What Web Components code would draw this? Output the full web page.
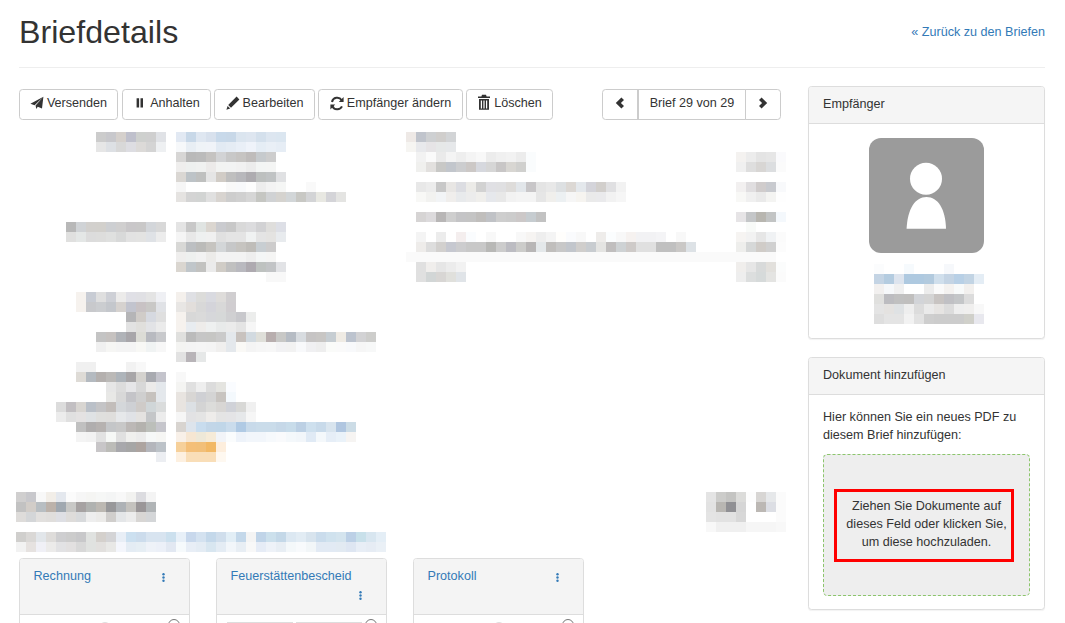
<!DOCTYPE html>
<html lang="de">
<head>
<meta charset="utf-8">
<title>Briefdetails</title>
<style>
html, body { margin: 0; height: 623px; overflow: hidden; background: #fff; }
body { font: 12.6px/18px "Liberation Sans", Arial, sans-serif; color: #333; }
</style>
</head>
<body>
<brief-page></brief-page>

<script>
const icons = {
  send: `<path d="M13.4.8.4 7.8 4.6 9.2zM13.4.8 5.6 9.6 6.2 13 7.8 10.8 12 12.6z"/>`,
  pause: `<path d="M3.6 2.2h2.5v9.4H3.6zM7.5 2.2H10v9.4H7.5z"/>`,
  pencil: `<path d="M10.6.6 13.4 3.4 5 11.8 2.2 9zM1.6 10 4.2 12.6.4 13.8z"/>`,
  refresh: `<path fill="none" stroke="currentColor" stroke-width="2" d="M11.7 4.2A5.3 5.3 0 0 0 2 6M2.3 9.8a5.3 5.3 0 0 0 9.7.6"/><path d="M13.6 1V6H8.8zM.4 13.4V8.4h4.8z"/>`,
  trash: `<path fill-rule="evenodd" d="M5-1.2h4l.6 1.6H13v1.6H1V.4h3.4zM2 3h10v10.8H2zM3.8 4.4v8h1.2v-8zM6.4 4.4v8h1.2v-8zM9 4.4v8h1.2v-8z"/>`,
  left: `<path d="M8.4 1.6 11 4 7.9 7 11 10 8.4 12.4 2.8 7z"/>`,
  right: `<path d="M5.6 1.6 3 4 6.1 7 3 10 5.6 12.4 11.2 7z"/>`,
};

// blurred-out text, one row of 10px cells per ";", "-" leaves a cell empty
class PixelPatch extends HTMLElement {
  connectedCallback() {
    const root = this.attachShadow({ mode: "open" });
    const rows = this.getAttribute("rows").trim().split(";").map((row) => {
      const cells = row.trim().split(/\s+/).map((c) =>
        `<i style="background:${c === "-" ? "transparent" : "#" + c}"></i>`);
      return `<div>${cells.join("")}</div>`;
    });
    root.innerHTML = `<style>
      :host { display: block; flex: none; }
      div { display: flex; height: 10px; }
      i { display: block; flex: none; width: 10px; height: 10px; }
    </style>${rows.join("")}`;
  }
}

class ToolButton extends HTMLElement {
  connectedCallback() {
    const root = this.attachShadow({ mode: "open" });
    const icon = this.getAttribute("icon");
    root.innerHTML = `<style>
      :host {
        display: inline-flex; align-items: center; justify-content: center; gap: 3px;
        box-sizing: border-box; height: 31px; padding: 0 0 3px;
        border: 1px solid #ccc; border-radius: 3.6px; background: #fff; color: #333;
        white-space: nowrap; cursor: pointer;
      }
      :host([joined="left"]) { border-radius: 3.6px 0 0 3.6px; }
      :host([joined="mid"]) { border-radius: 0; margin-left: -1px; border-left-width: 2px; }
      :host([joined="right"]) { border-radius: 0 3.6px 3.6px 0; margin-left: -1px; }
      svg { width: 14px; height: 14px; fill: currentColor; flex: none; overflow: visible; }
    </style>${icon ? `<svg viewBox="0 0 14 14">${icons[icon]}</svg>` : ""}<slot></slot>`;
  }
}

class SidePanel extends HTMLElement {
  connectedCallback() {
    const root = this.attachShadow({ mode: "open" });
    root.innerHTML = `<style>
      :host {
        display: block; border: 1px solid #ddd; border-radius: 3.6px; background: #fff;
        box-shadow: 0 1px 1px rgba(0,0,0,.05);
      }
      header {
        box-sizing: border-box; height: 37px; padding: 8px 14px;
        background: #f5f5f5; border-bottom: 1px solid #ddd; border-radius: 2.6px 2.6px 0 0;
      }
      section { padding: var(--body-pad, 13.5px 14px); }
    </style><header>${this.getAttribute("heading")}</header><section><slot></slot></section>`;
  }
}

class DocCard extends HTMLElement {
  connectedCallback() {
    const root = this.attachShadow({ mode: "open" });
    const wrap = this.hasAttribute("wrap");
    root.innerHTML = `<style>
      :host {
        display: block; box-sizing: border-box; width: 170.5px; height: 200px;
        border: 1px solid #ddd; border-radius: 3.6px; background: #fff;
      }
      header {
        box-sizing: border-box; height: 56px; padding: 8px 13.5px;
        background: #f4f4f4; border-bottom: 1px solid #ddd; border-radius: 2.6px 2.6px 0 0;
        display: flex; flex-wrap: wrap; align-content: flex-start; justify-content: space-between; column-gap: 10px;
      }
      a { color: #337ab7; text-decoration: none; }
      svg { display: block; width: 3px; height: 9px; fill: #337ab7; margin: 6px 10.5px 0 auto; }
      .body { position: relative; height: 100px; overflow: hidden; }
      .lens {
        position: absolute; right: 9px; top: 4px; box-sizing: border-box; width: 12px; height: 12px;
        border: 1.5px solid #777; border-radius: 50%;
      }
      .thumb {
        position: absolute; left: 79px; top: 7px; box-sizing: border-box; width: 12px; height: 12px;
        border: 1px solid #ddd; border-radius: 50%;
      }
      .rule { position: absolute; top: 7px; height: 1px; width: 66px; background: #ddd; }
    </style><header><a href="#">${this.getAttribute("heading")}</a>
      <svg viewBox="0 0 3 9"><circle cx="1.5" cy="1.3" r="1.2"/><circle cx="1.5" cy="4.5" r="1.2"/><circle cx="1.5" cy="7.7" r="1.2"/></svg>
    </header><div class="body"><span class="lens"></span>${wrap
      ? `<span class="rule" style="left:10px"></span><span class="rule" style="left:79px"></span>`
      : `<span class="thumb"></span>`}</div>`;
  }
}

class DropZone extends HTMLElement {
  connectedCallback() {
    const root = this.attachShadow({ mode: "open" });
    root.innerHTML = `<style>
      :host {
        display: flex; align-items: center; justify-content: center;
        box-sizing: border-box; height: 142px;
        border: 1px dashed #8cc56c; border-radius: 4.5px; background: #eee;
      }
      div {
        box-sizing: border-box; width: 180px; height: 73px; padding: 5px 1px 0 6px; margin-right: 5px;
        border: 3px solid #f00; text-align: center;
      }
    </style><div><slot></slot></div>`;
  }
}

class BriefPage extends HTMLElement {
  connectedCallback() {
    const root = this.attachShadow({ mode: "open" });
    root.innerHTML = `<style>
      :host { display: block; padding: 0 20px 0 19px; }
      .title { display: flex; justify-content: space-between; align-items: center; height: 67px; border-bottom: 1px solid #eee; }
      h1 { margin: 0 0 4px; font-size: 32.2px; font-weight: 500; line-height: 36px; }
      .title a { color: #337ab7; text-decoration: none; margin-bottom: 4px; }
      .cols { display: flex; gap: 27px; margin-top: 18px; }
      main { width: 762px; flex: none; }
      aside { flex: 1; display: flex; flex-direction: column; gap: 18px; }
      .tools { display: flex; justify-content: space-between; height: 31px; margin-top: 3px; }
      .tools > div { display: flex; gap: 3px; }
      .tools > div.pager { gap: 0; }
      .details { display: flex; height: 330px; margin: 12px 0 0 -3px; }
      .facts { width: 390px; flex: none; display: flex; flex-direction: column; }
      .notes { display: flex; flex-direction: column; flex: none; width: 380px; }
      .note { display: flex; justify-content: space-between; }
      .section-head { display: flex; justify-content: space-between; margin: 30px -5px 0 -3px; }
      .cards { display: flex; gap: 26.5px; margin-top: 6px; }
      .avatar {
        position: relative; width: 115px; height: 115px; margin: 0 auto 11px;
        background: #9b9b9b; border-radius: 12px; display: block;
      }
      .avatar svg { display: block; width: 115px; height: 115px; fill: #fff; }
      .recipient { display: flex; justify-content: center; padding-left: 4px; }
      p { margin: 0 0 10px; }
      .doc { --body-pad: 13px 14px; }
      .who { --body-pad: 14px 14px 14px; }
    </style>
    <div class="title">
      <h1>Briefdetails</h1>
      <a href="#">« Zurück zu den Briefen</a>
    </div>
    <div class="cols">
      <main>
        <div class="tools">
          <div>
            <tool-button icon="send" style="width:99px">Versenden</tool-button>
            <tool-button icon="pause" style="width:89px;margin-left:1px">Anhalten</tool-button>
            <tool-button icon="pencil" style="width:101px">Bearbeiten</tool-button>
            <tool-button icon="refresh" style="width:145px">Empfänger ändern</tool-button>
            <tool-button icon="trash" style="width:87px">Löschen</tool-button>
          </div>
          <div class="pager">
            <tool-button icon="left" joined="left" style="width:36px"></tool-button>
            <tool-button joined="mid" style="width:109px">Brief 29 von 29</tool-button>
            <tool-button icon="right" joined="right" style="width:36px"></tool-button>
          </div>
        </div>
        <div class="details">
          <div class="facts">
            <pixel-patch rows="- - - - - - - - ccc c8c8cc d5d0cc bfc0cc ced0ce cfcfcf e0e2e6 - e2e9f3 c8d8e8 dfe7f1 d8e1ed c8d9ea c8d8e8 dbe5ef dee6f0 d4e0ec dde6f0 dbe6f0;
              - - - - - - - - e6e6e6 dde0e4 d8d8d8 dddde2 dcdad8 d4d4d4 eef0f2 - f6f8fa e8eef4 eff3f7 f0f3f8 e2eaf3 e5ecf4 e9eff7 eff3fa e5edf5 e9eff6 e6edf5;
              - - - - - - - - - - - - - - - - d7d6d5 b9b9b9 bbbbbb c5c3c1 d2d3d5 c8c8c8 c6c4c2 bfbcbb c6cacd cdcdcd;
              - - - - - - - - - - - - - - - - efeeed eef0ef f0f1f0 eceae9 f2f3f2 f2f3f3 f1f1f1 ececec f3f5f4 f4f5f4;
              - - - - - - - - - - - - - - - - dad7d3 bdc3c7 bfc0bf e5e5e5 d1ccc6 bfbfbf b8b8bc aeacb0 bdc0bf c0c3c4 e0e1e3;
              - - - - - - - - - - - - - - - - f6f6f6 fff fff fff fff f9f9f9 f8f9fb fdfdfd ededed f3f3f3 f5f6f5 fff fff f9f9f9;
              - - - - - - - - - - - - - - - - e5e3e1 d4d4d4 d2d4d3 e0e0e0 d8d4d0 cdcdcd d0d0d0 d6d6d6 c5c6c2 d0d2d4 d5d3cf d2d6d8 c8c8c4 d3d4d6 e8e8e2 d4d4d8 e4e4e2"></pixel-patch>
            <pixel-patch style="margin-top:20px" rows="- - - - - b8b8b8 d0d3d6 d2d0cd d2d0cc cdcfd2 d0cfcf c9c7c9 c9c8c8 d3d6da d8d8d8 - e4e4e4 c8c8c8 e0e4e2 dbd6d0 cacbcf c8c8c8 d9d9d9 dcdcde d2d2d4 dfdedc dddfe6;
              - - - - - e0e0df e4e7e6 dcdcdc dddddc dfe0df d8d9d9 e2e2e2 e3e3e2 dfe2e6 ececec - f5f5f5 e8e8e8 eef0f0 f0f0f0 e0e0e0 e4e4e4 e4e4e4 f0f2f2 e4e4e4 e4e3e1 e8ebee;
              - - - - - - - - - - - - - - - - d8d8d6 bcbfc2 bbbbb9 c6c4c0 d3d6d8 c6c7c8 c6c4c0 bfbdb9 c8ced2 cdcccc;
              - - - - - - - - - - - - - - - - efeeed eef0ef f2f2f2 ecebe9 f3f3f3 f3f3f3 f3f3f3 eeeeee f4f6f6 f5f5f4;
              - - - - - - - - - - - - - - - - dad6d0 c0c6ca c2c2c0 ebebeb d0ccc6 c0c0c0 b9b9bf aeaab0 bec2c0 c2c4c6 e2e3e6;
              - - - - - - - - - - - - - - - - - - - - - - - - - f8f8f8 f8f8f8"></pixel-patch>
            <pixel-patch style="margin-top:10px" rows="- - - - - - f6f2ee c8ccd4 dfdfdf ced0d6 ecebea e0e0e6 e0e0e4 e4e4e4 eff0f4 - f4f0ec dfe0e4 dcdcda d9dae0 dedcda d0ced0;
              - - - - - - f6f2ee c8c9cc cbcdd0 c4c7cc d6d2cf c2c4ce c8c2c4 c9c8c6 e0e2e6 - e8e6e4 e2dedb d8d8d8 d4d4da d8d8d8 d0cdd0;
              - - - - - - - - - - - b5b5b7 d0ccc8 d6d9e0 dfdfdf - f6f2ee d8d8d8 dadada d6d7da d6d8d8 d0d0d2 c8c8cc ecedec;
              - - - - - - - - - - - e2e2e2 e0dfdc e2e3e6 ebebeb - f6f2ee e8ecf0 eeecea eef0f0 e8eaea ebebeb e4e4e4 f6f6f6;
              - - - - - - - - c4c4c4 c6c2c0 b0b3b8 a8a6aa dcdcd6 b8bac0 c8c9cc - e0e0de bbbbbb c6c6c6 c6c6c4 cacaca e4e8ec c8c2be d2dae0 dfdfd9 b8aeae c8c8c6 b6bcc4 d8dce0 c6c4c4 c8c6c4 c6cdd2 efebe4 bcc3ce d2d2d4 cdcdcb;
              - - - - - - - - f0f0f0 f6f6f4 f4f4f4 f4f4f4 f8f8f5 f0f3f3 f7f7f7 - f4f4f2 f4f4f4 f5f5f5 f4f4f4 f0efee e4e8ec faf9f6 f4f4f4 f6f6f6 f7f7f7 f2f2f4 f2f2f2 f8f9fb f0f0f2 eeeeee fafbf9 fafafa f8f9fb f6f6f6 f7f8f8;
              - - - - - - - - - - - - - - - - e2e2e2 b8b4b8 e6e8e8"></pixel-patch>
            <pixel-patch rows="- - - - - - f0f0f0 f0f0f0 - - - f2f2f2 f8f8f8;
              - - - - - - dedbd6 b4bac0 b4b0ae bbb9b7 aeb4ba a8a6a8 d4d2ce a8aab0 c4c4cc - f8f8f8;
              - - - - - - - - - e6e6e6 dcdcdc e6e6e8 d8d8d8 ecebea e4e8ec - f4f4f2 e0e0e0 eeeeee dcdcdc e4e4e0 fafcff;
              - - - - - - - - - e8e8e6 d8d8d8 c4c4c8 cfcfcf c6c2be e4e8ec - e8e4e0 d8d6d4 cfd0d4 d4d4d4 c8c4c0 f4f9fd;
              - - - - dcdcdc c2bfc2 d8d5d1 bac0c8 c4c4c6 c2bdba d4d7da ced0d4 cfcbc8 d0d6d8 dadcdc - e8e4e0 dce0e4 d4d4d4 dcdcda d8d6d4 d0d2d8 d8d8d6 f0f0f0;
              - - - - ececec e0e0e0 e4e2e2 dfe2e4 dfdfdd dfdedc e6e8ea e0e2e6 e4e2e0 c4c6c8 ececec - f6f6f6 e2e2e4 e4e4e4 eeecea e4e4e4 e4e4e6 e6e8ea f6f6f6;
              - - - - - - c0c0c0 b0aeae b6b2b0 c4c6c8 c8c8c8 bcb8b6 b4b2ae bcbfba c6c6cc - d8d4d0 dde4ec c8dcee c2d6e8 c0d6e8 cadcec b0cae4 c8daea cadcea cadcea c6d8e8 c8dcea bcd0e4 cee0ee c8daea d8e4ee b0c6e0 ccdce6;
              - - - - - - f4f4f4 f2f2f2 e2e2e2 f6f8f6 e0e0e0 f0f0ee ececec f6f8f8 f6f6f4 - f8f0e8 f6e6d2 eee8d8 f6ebd8 f2f4f8 fafcfd eef3fa f2f6fb f2f6fb f6f9fc f9fafc f4f8fb f2f6fa e0eaf5 f4f8fb e6eef7 eaf2f9 f6f4f2;
              - - - - - - - - c8c6c8 bcbcb8 a8a8ac a6a6a6 ada4a0 b4b6bc bcc2c8 - f6d09a f4bf78 f2bf78 f2b864 fdeedd;
              - - - - - - - - - - - - - - eceef2 - fdf0e0 f9deb8 f9deb8 f9deb8 fef8f0"></pixel-patch>
          </div>
          <div class="notes">
            <pixel-patch rows="eee9e6 c0c4cc ced0d2 d0cecc d2d4d6; f6f5f2 e8e9ec e6e4e6 e6e8e8 e6e8ea"></pixel-patch>
            <div class="note">
              <pixel-patch rows="- f2f2f2 fafafa eaeaea f4f4f4 eeeeee f4f4f4 f8f8f8 ececec f0f0f0 f2f2f2 ececec fafcfd; - f0f0ee e2e0de c8c8c6 c2c6cc cccdcf ccc8c6 d6d8de d6d6d6 c8c6c6 d8d6d2 d0d0ce fafcfd"></pixel-patch>
              <pixel-patch rows="f4f2f0 ececec e4e4e4 e6e6e6 fafafc; f0f0f0 dedede d8d6d4 dcdee0 fbfbfb"></pixel-patch>
            </div>
            <div class="note" style="margin-top:10px">
              <pixel-patch rows="- e8e8e8 ececec c8c8c8 e8e6e4 dcdde2 ecebe8 d2d2d2 e0e0e4 e0e0e2 dedcda e2e6ea c8c6c8 e4e4e4 e8e8e8 dde0e2 dcd8d4 e4e8ec d4d4da d2cfcc e0e0e2 f2f2f2; - f8f8f6 f2f2f0 f2f4f6 f0eeec e8eaec ececec f0efec e6e8ec e8e8e8 f2f2f2 f4f4f4 f4f4f4 e6e6e6 f0efec ecf0f2 f6f6f6 f6f4f0 eaeaea eaeaec f2f2f2 f6f6f6"></pixel-patch>
              <pixel-patch rows="f2f0f0 e0dee0 d0cccc c8cacf f8f9fb; f8f8f6 f0f0f0 eaeaea f4f4f2 fefefe"></pixel-patch>
            </div>
            <div class="note" style="margin-top:10px">
              <pixel-patch rows="- d6d4d4 dcdadc b8b6b6 cecece c4c4c6 c4c4c4 c0bebc c0c2c6 cecece cccccc ccc8c8 c6ccd0 c2c2c2"></pixel-patch>
              <pixel-patch rows="e6e4e6 c4c6c8 b8b6b0 c2c4c4 f4f8fc; - f8faf8"></pixel-patch>
            </div>
            <div class="note">
              <pixel-patch rows="- f4f4f4 fff ececec fff f4eeee fafcfe fff f8f8f8 fff fff f8f8f8 f6f4f2 eeeeee f4f4f4 fffefc fafbfd f8f8f8 fff eeecea fbfdfe f8f8f8 f6f2f0 f2f2f4 f2f2f4 f4f4f6 fff f8f8f8; - eeecea dddddd d2d0ce c6c8d0 ccccce c8c8c8 c8c8c8 b8b8b6 cccccc bcbcc2 ccccca b8b6b6 e4e8ea c0bebc c8c8c8 c2c6cc d0cecc c8ccd0 e4e4e2 c0bebe ced2d4 cecac8 e0e0e0 e0e0e0 c0c0c0 c0c0c0 cac8c6 dde2e6"></pixel-patch>
              <pixel-patch rows="f6f4f2 f2f2f2 e6e6e6 f0f2f4 fbfbfb; eeeeec d6d8d8 d0ccc8 d0d0d0 fcfcfc"></pixel-patch>
            </div>
            <pixel-patch rows="fafafa fafafa fafafa fafafa fafafa fafafa fafafa fafafa fafafa fafafa fafafa fafafa fafafa fafafa fafafa fafafa fafafa fafafa fafafa fafafa fafafa fafafa fafafa fafafa fafafa fafafa fafafa fafafa fafafa fafafa fafafa fafafa fafafa fafafa fafafa fafafa fafafa"></pixel-patch>
            <div class="note">
              <pixel-patch rows="- e0e0e0 f0eeec e6e6e6 ececec f2f2f2; - e0e0e0 d2d6d6 d8d6d4 e0e0dc e0e4e8"></pixel-patch>
              <pixel-patch rows="f0eeec e6e6e6 d8dada e2e0dc fbfcfc; eeeeee dcdede d6dada e4e4e2 fbfbfb"></pixel-patch>
            </div>
          </div>
        </div>
        <div class="section-head">
          <pixel-patch rows="d0cfcf c8c8cc f8f8f8 f2eee8 e4e8ee fbfbfb f6f6f6 f5f5f3 f6f7f6 f4f5f5 f8f8f8 f2f2f0 dcdce0 f4f4f4;
            c2c2c2 d2cdc8 b8bec2 bcb2aa a0a8b0 c8c8c6 a6a2a2 b0b2b0 bcb8b2 98989a aeb2b6 c4c2be 9a9698 b0b4b6;
            dedcda d4d6d8 e2e0de e0dedc dedfe4 dedcda d8dadc eeeeee ecebe9 d0cecc e4e6e8 ececec d8d6d4 d4d6d8;
            -;
            d0cfcd dad8d6 e2e6ea dedcda ceced0 cccccc c8c8ca e0e2e0 d4d0cc d4d4d6 e8eef6 cce0f0 ccdcec d8e4f0 d8e4f0 cce0ee e8f0f8 c8d8ec d4e2f0 c4d8ea d0deec e2eef6 c4d8ea f4f4f4 c0d4e8 cce0ec c4d8e8 dce8f2 e2ecf4 d8e4ee cadcec d0e2ee d4e4ee bcd0e6 c8e0ea d8e6f0 e4eef6;
            f2f2f2 e6e2e0 f0f0f6 ecebea e2e2e4 e2e0e0 d8d8d8 e0e2e0 e2e0de e8e8e6 f4f6fc e4ecf4 e6eef4 eef2f8 ecf0f8 e2e8f2 f6fafc e8eef6 e4ecf4 d8e6f0 e4ecf4 f2f6fa e8eef4 f8f8f8 e6ecf6 eef2f8 e8eef4 f4f8fa f8fafc f2f6f8 e2eaf4 e2eaf4 e2eaf2 dee6f2 e8eef6 e6ecf4 eaf0f6"></pixel-patch>
          <pixel-patch rows="e4e4e4 ccccca c4c4c2 dcdcda fdfdfd d8d6d4 e6e8ea fbfbfb;
            e2e2e2 b8b6b2 909094 d6d6d6 fff bcb8b4 dcdee4 fbfbfb;
            e4e4e4 e2e2e2 e2e2e2 d8d8d8 fff fff fff fbfbfb;
            f8f8f8 f0f0f0 f0f0f0 f0f0f0 f6f6f6 f6f6f6 f6f6f6 f8f8f8"></pixel-patch>
        </div>
        <div class="cards">
          <doc-card heading="Rechnung"></doc-card>
          <doc-card heading="Feuerstättenbescheid" wrap></doc-card>
          <doc-card heading="Protokoll"></doc-card>
        </div>
      </main>
      <aside>
        <side-panel class="who" heading="Empfänger">
          <div class="avatar"><svg viewBox="0 0 115 115">
            <circle cx="57" cy="40.7" r="16"/>
            <path d="M37.6 90.8C38.5 71 46 59 57.5 59S76.5 71 77 90.8z"/>
          </svg></div>
          <div class="recipient">
            <pixel-patch rows="fbfcfd fff fff f6fafd fff fff fff f6f8fb fff fff fff;
              c4d4e4 b4cce0 dde4ee aec9e0 aec9e0 b2cade d0dfec c4d4e4 b8d0e6 c2d4e4 e4edf5;
              f2f0ef f6f8fa f0f0f0 fff fff ececec fafafa f4f2f0 f8fafa f2f0ee fff;
              e0e0de bcbcc0 c0c0c0 c0bfbe d2d4d8 d4d4d4 c8c4c2 c0c0c4 c4c6c8 dcdcdc fff;
              e4e4e4 e4e2e0 dfe2e4 eeeeee dcdcdc eaeaea e6e4e2 dcdcdc eeeeee f0efee f8f8f8;
              dedede e4e4e4 e4e4e4 f2f2f2 e2e2e2 cecece cccccc cccccc cccccc d0d0ca e8e8ee"></pixel-patch>
          </div>
        </side-panel>
        <side-panel class="doc" heading="Dokument hinzufügen">
          <p>Hier können Sie ein neues PDF zu diesem Brief hinzufügen:</p>
          <drop-zone>Ziehen Sie Dokumente auf dieses Feld oder klicken Sie, um diese hochzuladen.</drop-zone>
        </side-panel>
      </aside>
    </div>`;
  }
}

customElements.define("pixel-patch", PixelPatch);
customElements.define("tool-button", ToolButton);
customElements.define("side-panel", SidePanel);
customElements.define("doc-card", DocCard);
customElements.define("drop-zone", DropZone);
customElements.define("brief-page", BriefPage);
</script>
</body>
</html>
